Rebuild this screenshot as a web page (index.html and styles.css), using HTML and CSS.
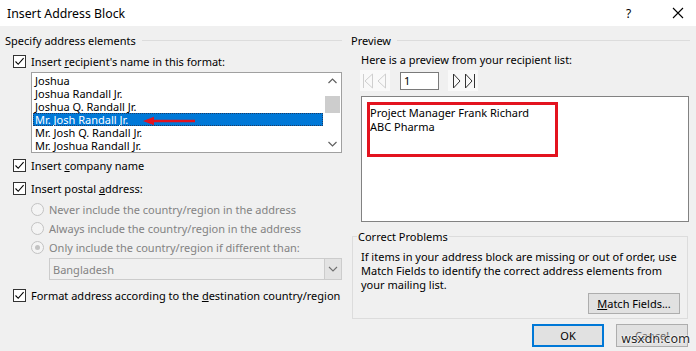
FILE: index.html
```html
<!DOCTYPE html>
<html>
<head>
<meta charset="utf-8">
<link rel="stylesheet" href="styles.css">
</head>
<body>
<div class="dialog">
  <div class="titlebar">
    <span class="title">Insert Address Block</span>
    <span class="help">?</span>
    <svg class="close" width="12" height="12" viewBox="0 0 12 12"><path d="M1 1L11 11M11 1L1 11" stroke="#000" stroke-width="1.1" fill="none"/></svg>
  </div>
  <div class="main">
    <div class="left">
      <div class="group-head"><span>Specify address elements</span></div>
      <div class="check r1"><span class="box"><svg width="11" height="11" viewBox="0 0 11 11"><path d="M1.5 5.5L4.2 8.3L9.6 2.2" stroke="#000" stroke-width="1.1" fill="none"/></svg></span><span>Insert <u>r</u>ecipient's name in this format:</span></div>
      <div class="listbox">
        <div class="items">
          <div class="item">Joshua</div>
          <div class="item">Joshua Randall Jr.</div>
          <div class="item">Joshua Q. Randall Jr.</div>
          <div class="item sel">Mr. Josh Randall Jr.</div>
          <div class="item">Mr. Josh Q. Randall Jr.</div>
          <div class="item">Mr. Joshua Randall Jr.</div>
        </div>
        <div class="vscroll">
          <svg class="chev" width="17" height="17" viewBox="0 0 17 17"><path d="M4.5 10L8.5 6L12.5 10" stroke="#606060" stroke-width="1.2" fill="none"/></svg>
          <div class="track"><div class="thumb"></div></div>
          <svg class="chev" width="17" height="17" viewBox="0 0 17 17"><path d="M4.5 7L8.5 11L12.5 7" stroke="#606060" stroke-width="1.2" fill="none"/></svg>
        </div>
        <svg class="annot-arrow" width="54" height="10" viewBox="0 0 54 10"><path d="M8 5H52" stroke="#e3131f" stroke-width="2.4"/><path d="M0 5L11 0.8V9.2Z" fill="#e3131f"/></svg>
      </div>
      <div class="check r2"><span class="box"><svg width="11" height="11" viewBox="0 0 11 11"><path d="M1.5 5.5L4.2 8.3L9.6 2.2" stroke="#000" stroke-width="1.1" fill="none"/></svg></span><span>Insert <u>c</u>ompany name</span></div>
      <div class="check r3"><span class="box"><svg width="11" height="11" viewBox="0 0 11 11"><path d="M1.5 5.5L4.2 8.3L9.6 2.2" stroke="#000" stroke-width="1.1" fill="none"/></svg></span><span>Insert postal <u>a</u>ddress:</span></div>
      <div class="radio rr1"><span class="circle"></span><span>Never include the country/region in the address</span></div>
      <div class="radio rr2"><span class="circle"></span><span>Always include the country/region in the address</span></div>
      <div class="radio rr2"><span class="circle on"><span class="dot"></span></span><span>Only include the country/region if different than:</span></div>
      <div class="combo">
        <span class="combo-text">Bangladesh</span>
        <span class="combo-btn"><svg width="10" height="6" viewBox="0 0 10 6"><path d="M1 1L5 5L9 1" stroke="#707070" stroke-width="1.1" fill="none"/></svg></span>
      </div>
      <div class="check r4"><span class="box"><svg width="11" height="11" viewBox="0 0 11 11"><path d="M1.5 5.5L4.2 8.3L9.6 2.2" stroke="#000" stroke-width="1.1" fill="none"/></svg></span><span>Format address according to the <u>d</u>estination country/region</span></div>
    </div>
    <div class="right">
      <div class="group-head"><span>Preview</span></div>
      <div class="hint">Here is a preview from your recipient list:</div>
      <div class="nav">
        <div class="navgrp">
          <svg width="14" height="20" viewBox="0 0 14 20"><path d="M2.5 3V17" stroke="#cfcfcf"/><path d="M11.5 3L4 10L11.5 17Z" stroke="#cfcfcf" fill="none"/></svg>
          <svg width="14" height="20" viewBox="0 0 14 20"><path d="M10.5 3L3 10L10.5 17Z" stroke="#cfcfcf" fill="none"/></svg>
        </div>
        <div class="navinput">1</div>
        <div class="navgrp">
          <svg width="14" height="20" viewBox="0 0 14 20"><path d="M4.5 3L11 10L4.5 17Z" stroke="#333" fill="none"/></svg>
          <svg width="14" height="20" viewBox="0 0 14 20"><path d="M2.5 3L9 10L2.5 17Z" stroke="#333" fill="none"/><path d="M11.5 3V17" stroke="#333"/></svg>
        </div>
      </div>
      <div class="preview">
        <div>Project Manager Frank Richard</div>
        <div>ABC Pharma</div>
        <div class="annot-rect"></div>
      </div>
      <div class="problems">
        <div class="problems-label">Correct Problems</div>
        <p class="problems-text">If items in your address block are missing or out of order, use Match Fields to identify the correct address elements from your mailing list.</p>
        <div class="match-row"><span class="btn match"><u>M</u>atch Fields...</span></div>
      </div>
      <div class="buttons">
        <span class="btn ok">OK</span>
        <span class="btn cancel">Cancel</span>
      </div>
    </div>
  </div>
  <div class="watermark">wsxdn.com</div>
</div>
</body>
</html>
```

FILE: styles.css
```css
* { box-sizing: border-box; }
html, body { margin: 0; padding: 0; }
body {
  width: 696px;
  height: 351px;
  overflow: hidden;
  font-family: "Noto Sans", "Open Sans", sans-serif;
  font-size: 11px;
  color: #000;
  background: #f0f0f0;
}
u { text-decoration: underline; text-underline-offset: 1px; }
.dialog { position: relative; width: 696px; height: 351px; }

.titlebar {
  height: 26px;
  background: #fff;
  display: flex;
  align-items: center;
  padding-left: 7px;
  font-size: 12px;
}
.title { flex: 1; font-size: 12.3px; }
.help { width: 10px; margin-right: 36px; font-size: 12px; }
.close { margin-right: 12px; }

.main {
  display: flex;
  height: 325px;
  padding-top: 6px;
}
.left { width: 337px; margin-left: 5px; display: flex; flex-direction: column; }
.right { width: 339px; margin-left: 9px; display: flex; flex-direction: column; }

.group-head {
  height: 16px;
  display: flex;
  align-items: center;
}
.group-head::after {
  content: "";
  flex: 1;
  height: 1px;
  background: #dcdcdc;
  margin-left: 6px;
}

.check, .radio {
  height: 16px;
  display: flex;
  align-items: center;
  white-space: nowrap;
}
.check { padding-left: 8px; }
.box {
  width: 13px; height: 13px;
  border: 1px solid #333;
  background: #fff;
  display: flex; align-items: center; justify-content: center;
  margin-right: 5px;
}
.r1 { margin-top: 5px; }
.r2 { margin-top: 4px; }
.r3 { margin-top: 7px; }
.r4 { margin-top: 7px; }

.radio { padding-left: 26px; color: #838383; }
.rr1 { margin-top: 5px; }
.rr2 { margin-top: 3px; }
.circle {
  width: 13px; height: 13px;
  border-radius: 50%;
  border: 1px solid #c3c3c3;
  background: #f4f4f4;
  margin-right: 5px;
  display: flex; align-items: center; justify-content: center;
}
.dot { width: 5px; height: 5px; border-radius: 50%; background: #c3c3c3; }

.listbox {
  position: relative;
  margin-top: 3px;
  margin-left: 26px;
  width: 311px;
  height: 81px;
  border: 1px solid #a0a0a0;
  background: #fff;
  display: flex;
}
.items { flex: 1; padding: 1px 0 0 1px; }
.item {
  height: 13px;
  line-height: 13px;
  padding-left: 2px;
  white-space: nowrap;
}
.item.sel {
  background: #0078d7;
  color: #fff;
  outline: 1px dotted #1c3c66;
  outline-offset: -1px;
}
.vscroll {
  width: 18px;
  display: flex;
  flex-direction: column;
  padding-left: 1px;
}
.chev { display: block; flex: none; }
.track { flex: 1; padding-top: 6px; }
.thumb { width: 15px; height: 17px; background: #cdcdcd; margin-left: 1px; }
.annot-arrow { position: absolute; left: 111px; top: 43px; }

.combo {
  margin-top: 3px;
  margin-left: 44px;
  width: 293px;
  height: 22px;
  border: 1px solid #cccccc;
  background: #f0f0f0;
  display: flex;
  align-items: center;
}
.combo-text { flex: 1; padding-left: 3px; color: #838383; }
.combo-btn {
  width: 17px; height: 20px;
  background: #e3e3e3;
  border-left: 1px solid #cccccc;
  display: flex; align-items: center; justify-content: center;
}

.hint { margin-top: 4px; margin-left: 10px; height: 16px; line-height: 16px; }
.nav { margin-top: 2px; margin-left: 9px; height: 21px; display: flex; align-items: center; }
.navgrp { display: flex; background: #f9f9f9; height: 21px; align-items: center; padding: 0 1px; }
.navgrp svg { display: block; }
.navinput {
  margin: 0 9px 0 10px;
  width: 39px; height: 18px;
  border: 1px solid #7a7a7a;
  background: #fff;
  padding-left: 3px;
  line-height: 16px;
}

.preview {
  position: relative;
  margin-top: 5px;
  margin-left: 10px;
  width: 328px;
  height: 126px;
  border: 1px solid #828282;
  background: #fff;
  padding: 9px 0 0 8px;
  line-height: 14px;
}
.annot-rect {
  position: absolute;
  left: 5px; top: 5px;
  width: 191px; height: 55px;
  border: 3px solid #e3131f;
}

.problems {
  margin-top: 14px;
  margin-left: 1px;
  width: 336px;
  border: 1px solid #dcdcdc;
  display: flex;
  flex-direction: column;
  padding-bottom: 4px;
}
.problems-label {
  align-self: flex-start;
  margin: -8px 0 0 4px;
  padding: 0 1px;
  height: 16px;
  background: #f0f0f0;
  line-height: 16px;
}
.problems-text { margin: 5px 0 0 8px; line-height: 14px; width: 322px; }
.match-row { display: flex; justify-content: flex-end; margin-top: 1px; padding-right: 7px; }

.btn {
  display: flex; align-items: center; justify-content: center;
  background: #e1e1e1;
  border: 1px solid #adadad;
}
.match { width: 92px; height: 21px; }
.buttons { display: flex; gap: 12px; margin-top: 5px; margin-left: 181px; }
.ok, .cancel { width: 72px; height: 23px; }
.ok { border: 2px solid #0078d7; }
.cancel { color: #666; }

.watermark {
  position: absolute;
  left: 621px; top: 331px;
  font-family: "DejaVu Sans", sans-serif;
  font-size: 12.5px;
  color: #2b2b2b;
  text-shadow: 0 0 2px #fff, 0 0 2px #fff, 0 0 1px #fff;
  letter-spacing: -0.2px;
}
```
